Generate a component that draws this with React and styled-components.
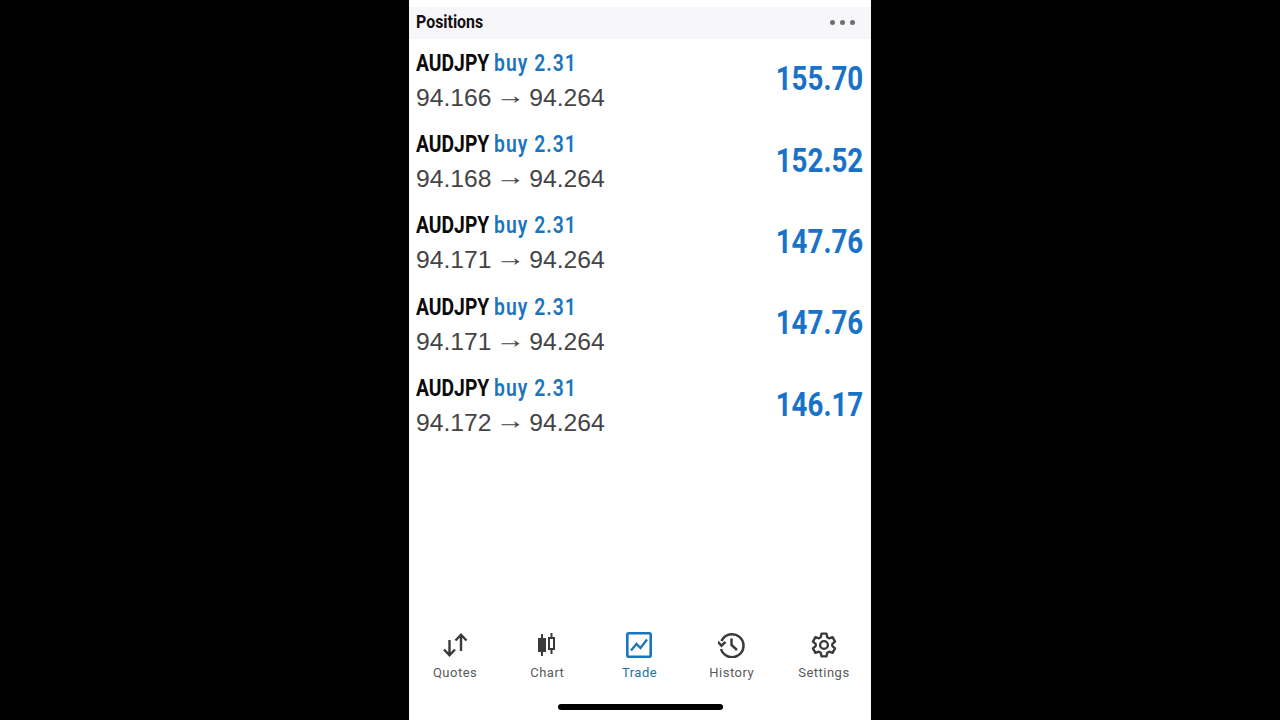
import styled, { createGlobalStyle } from 'styled-components';

const positions = [
  { id: 1, open: '94.166', profit: '155.70' },
  { id: 2, open: '94.168', profit: '152.52' },
  { id: 3, open: '94.171', profit: '147.76' },
  { id: 4, open: '94.171', profit: '147.76' },
  { id: 5, open: '94.172', profit: '146.17' },
];

const GlobalStyle = createGlobalStyle`
  html, body {
    margin: 0;
    height: 100%;
    background: #000;
    overflow: hidden;
  }
  #root {
    height: 100%;
  }
`;

function QuotesIcon() {
  return (
    <svg width="28" height="26" viewBox="0 0 28 26" fill="none" stroke="#3a3a3c" strokeWidth="2.4">
      <path d="M8.500 8v15M3 17.500l5.500 5.800 5.500-5.800" />
      <path d="M20 19V3M14.500 8.500L20 2.700l5.500 5.800" />
    </svg>
  );
}

function ChartIcon() {
  return (
    <svg width="20" height="24" viewBox="0 0 20 24" fill="none" stroke="#3a3a3c" strokeWidth="2">
      <path d="M5 1v5M5 18v5M14.500 0v5M14.500 16v5" />
      <rect x="2" y="6" width="6" height="12" fill="#3a3a3c" />
      <rect x="12" y="5" width="5" height="11" />
    </svg>
  );
}

function TradeIcon() {
  return (
    <svg width="26" height="26" viewBox="0 0 26 26" fill="none" stroke="#1b75bb" strokeWidth="2.300">
      <rect x="1.300" y="1.300" width="23.400" height="23.400" rx="1.500" strokeWidth="2.600" />
      <path d="M5 18.500l5.500-6.500 4 4L21 7.500" />
    </svg>
  );
}

function HistoryIcon() {
  return (
    <svg width="28" height="26" viewBox="2 0 28 26" fill="none" stroke="#3a3a3c" strokeWidth="2.500">
      <path d="M5.500 9A11.500 11.500 0 1 1 5 17" />
      <path d="M1.500 9.500l4 4.200 4-3.800" />
      <path d="M15.500 6.500V13l5.500 5" />
    </svg>
  );
}

function SettingsIcon() {
  return (
    <svg width="26" height="26" viewBox="0 0 24 24" fill="none" stroke="#3a3a3c" strokeWidth="2.200" strokeLinejoin="round">
      <path d="M9.700 1.500h4.600l.7 3.300 1.700 1 3.200-1 2.300 4-2.500 2.200v2l2.500 2.200-2.300 4-3.200-1-1.700 1-.7 3.300H9.700L9 19.200l-1.700-1-3.200 1-2.300-4L4.300 13v-2L1.800 8.800l2.300-4 3.200 1 1.700-1z" />
      <circle cx="12" cy="12" r="3.600" />
    </svg>
  );
}

const tabs = [
  { label: 'Quotes', icon: <QuotesIcon /> },
  { label: 'Chart', icon: <ChartIcon /> },
  { label: 'Trade', icon: <TradeIcon />, active: true },
  { label: 'History', icon: <HistoryIcon /> },
  { label: 'Settings', icon: <SettingsIcon /> },
];

export default function App() {
  return (
    <Screen>
      <GlobalStyle />
      <Phone>
        <Header>
          <Title>Positions</Title>
          <Dots>
            <span />
            <span />
            <span />
          </Dots>
        </Header>
        <List>
          {positions.map((pos) => (
            <Row key={pos.id}>
              <div>
                <Deal>
                  AUDJPY <Side>buy 2.31</Side>
                </Deal>
                <Prices>
                  {pos.open}<Arrow>→</Arrow>94.264
                </Prices>
              </div>
              <Profit>{pos.profit}</Profit>
            </Row>
          ))}
        </List>
        <TabBar>
          {tabs.map((tab) => (
            <Tab key={tab.label} $active={tab.active}>
              <TabIcon>{tab.icon}</TabIcon>
              {tab.label}
            </Tab>
          ))}
        </TabBar>
        <HomeBar>
          <span />
        </HomeBar>
      </Phone>
    </Screen>
  );
}

const Screen = styled.div`
  height: 720px;
  display: flex;
  justify-content: center;
  background: #000;
`;

const Phone = styled.div`
  width: 462px;
  height: 720px;
  padding-top: 7px;
  box-sizing: border-box;
  display: flex;
  flex-direction: column;
  background: #fff;
`;

const Header = styled.div`
  height: 32px;
  flex: none;
  display: flex;
  align-items: center;
  justify-content: space-between;
  padding: 0 16px 2px 7px;
  box-sizing: border-box;
  background: #f7f7f9;
`;

const Title = styled.div`
  font: 700 18.500px Roboto, sans-serif;
  color: #111;
  transform: scaleX(0.86);
  transform-origin: left center;
`;

const Dots = styled.div`
  display: flex;
  gap: 5px;

  span {
    width: 5px;
    height: 5px;
    border-radius: 50%;
    background: #6e6e73;
  }
`;

const List = styled.div`
  flex: 1;
  padding-top: 1px;
`;

const Row = styled.div`
  height: 81.400px;
  padding: 0 8px 0 7px;
  display: flex;
  align-items: center;
  justify-content: space-between;
`;

const Deal = styled.div`
  font: 700 23px Roboto, sans-serif;
  line-height: 34px;
  color: #0b0b0b;
  white-space: nowrap;
  transform: scaleX(0.84);
  transform-origin: left center;
`;

const Side = styled.span`
  color: #1c75bc;
  font-weight: 600;
  letter-spacing: 1.200px;
`;

const Prices = styled.div`
  font: 400 24.700px 'Liberation Sans', sans-serif;
  line-height: 34px;
  color: #444446;
  white-space: nowrap;
`;

const Arrow = styled.span`
  display: inline-block;
  margin: 0 6.500px;
  transform: translateY(-2px) scaleX(1.200);
`;

const Profit = styled.div`
  font: 700 33px Roboto, sans-serif;
  color: #1872c8;
  padding-bottom: 4px;
  transform: scaleX(0.84);
  transform-origin: right center;
`;

const TabBar = styled.div`
  flex: none;
  margin-bottom: 24px;
  padding-right: 1px;
  display: grid;
  grid-template-columns: repeat(5, 1fr);
`;

const Tab = styled.div`
  display: flex;
  flex-direction: column;
  align-items: center;
  gap: 7px;
  font: 400 13px Roboto, sans-serif;
  letter-spacing: 0.5px;
  color: ${(p) => (p.$active ? '#1b75a5' : '#59595c')};
`;

const TabIcon = styled.div`
  height: 26px;
  display: flex;
  align-items: center;
`;

const HomeBar = styled.div`
  flex: none;
  height: 16px;
  display: flex;
  justify-content: center;

  span {
    width: 165px;
    height: 6px;
    border-radius: 3px;
    background: #000;
  }
`;
